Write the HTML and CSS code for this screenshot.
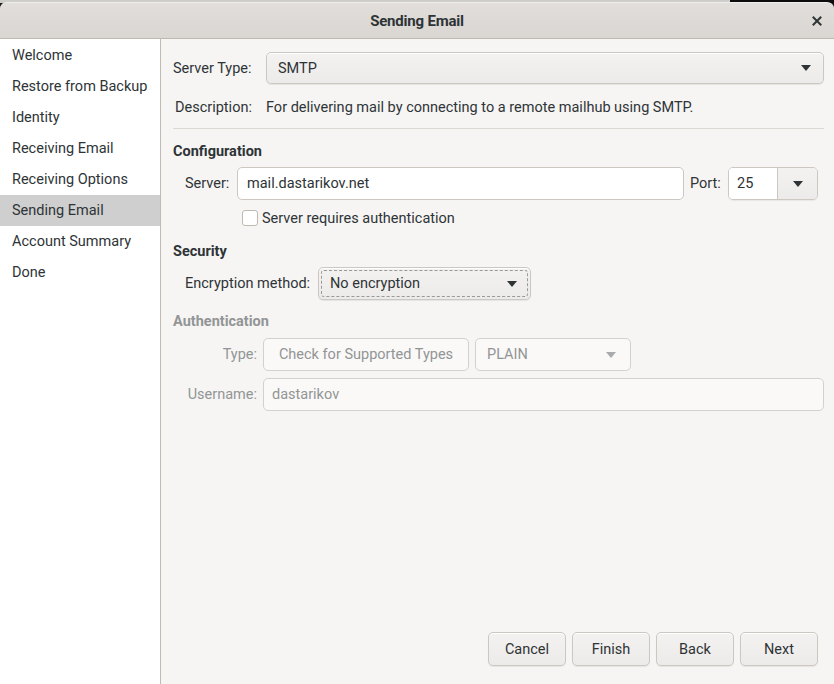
FILE: index.html
```html
<!DOCTYPE html>
<html>
<head>
<meta charset="utf-8">
<link rel="stylesheet" href="styles.css">
</head>
<body>
<div class="desk">
  <div class="desk-left"></div>
  <div class="desk-right"></div>
</div>
<div class="window">
  <header class="titlebar">
    <span class="title">Sending Email</span>
    <span class="close">
      <svg width="10" height="10" viewBox="0 0 10 10"><path d="M1.5 1.5 L8.5 8.5 M8.5 1.5 L1.5 8.5" stroke="#2e3436" stroke-width="2" stroke-linecap="square"/></svg>
    </span>
  </header>
  <div class="body">
    <nav class="sidebar">
      <div class="nav-item">Welcome</div>
      <div class="nav-item">Restore from Backup</div>
      <div class="nav-item">Identity</div>
      <div class="nav-item">Receiving Email</div>
      <div class="nav-item">Receiving Options</div>
      <div class="nav-item selected">Sending Email</div>
      <div class="nav-item">Account Summary</div>
      <div class="nav-item">Done</div>
    </nav>
    <main class="content">
      <div class="row type-row">
        <span class="lbl-type">Server Type:</span>
        <div class="combo combo-type">
          <span>SMTP</span>
          <svg class="arrow" width="10" height="6" viewBox="0 0 10 6"><path d="M0 0 H10 L5 6 Z" fill="#2e3436"/></svg>
        </div>
      </div>
      <div class="row desc-row">
        <span class="lbl-desc">Description:</span>
        <span>For delivering mail by connecting to a remote mailhub using SMTP.</span>
      </div>
      <hr class="sep">
      <h3 class="section">Configuration</h3>
      <div class="row server-row">
        <span class="lbl-server">Server:</span>
        <div class="entry entry-server">mail.dastarikov.net</div>
        <span class="lbl-port">Port:</span>
        <div class="port">
          <span class="port-val">25</span>
          <span class="port-btn"><svg width="10" height="6" viewBox="0 0 10 6"><path d="M0 0 H10 L5 6 Z" fill="#2e3436"/></svg></span>
        </div>
      </div>
      <label class="check-row">
        <span class="checkbox"></span>
        <span>Server requires authentication</span>
      </label>
      <h3 class="section sec-security">Security</h3>
      <div class="row enc-row">
        <span class="lbl-enc">Encryption method:</span>
        <div class="combo combo-enc">
          <div class="focus">
            <span>No encryption</span>
            <svg class="arrow" width="10" height="6" viewBox="0 0 10 6"><path d="M0 0 H10 L5 6 Z" fill="#2e3436"/></svg>
          </div>
        </div>
      </div>
      <h3 class="section disabled sec-auth">Authentication</h3>
      <div class="row auth-row">
        <span class="lbl-auth">Type:</span>
        <div class="btn-dis btn-check">Check for Supported Types</div>
        <div class="btn-dis combo-plain">
          <span>PLAIN</span>
          <svg class="arrow" width="10" height="6" viewBox="0 0 10 6"><path d="M0 0 H10 L5 6 Z" fill="#a8aaab"/></svg>
        </div>
      </div>
      <div class="row user-row">
        <span class="lbl-auth">Username:</span>
        <div class="entry-dis">dastarikov</div>
      </div>
      <div class="spacer"></div>
      <div class="buttons">
        <button class="btn">Cancel</button>
        <button class="btn">Finish</button>
        <button class="btn">Back</button>
        <button class="btn">Next</button>
      </div>
    </main>
  </div>
</div>
</body>
</html>
```

FILE: styles.css
```css
* { box-sizing: border-box; }
html, body { margin: 0; padding: 0; }
body {
  width: 834px;
  height: 684px;
  overflow: hidden;
  font-family: Roboto, "Noto Sans", sans-serif;
  font-size: 14.5px;
  color: #2e3436;
  background: #1a1a1a;
  position: relative;
}
.desk {
  display: flex;
  height: 3px;
}
.desk-left { width: 730px; background: #cfcdca; }
.desk-right { flex: 1; background: #0c0c0c; }
.window {
  display: flex;
  flex-direction: column;
  height: 682px;
  margin-top: -1px;
  background: #f6f5f4;
  border-radius: 7px 7px 0 0;
  overflow: hidden;
}
.titlebar {
  height: 37px;
  flex: none;
  display: flex;
  align-items: center;
  justify-content: center;
  position: relative;
  background: linear-gradient(#e1dedb, #dad6d2);
  border-bottom: 1px solid #bfb8b1;
  border-top: 1px solid #f0eeec;
}
.title {
  font-weight: 700;
  font-size: 15px;
  color: #2e3436;
  letter-spacing: -0.2px;
}
.close {
  position: absolute;
  right: 12px;
  top: 13px;
  display: flex;
}
.body {
  flex: 1;
  display: flex;
  min-height: 0;
}
.sidebar {
  width: 161px;
  flex: none;
  background: #ffffff;
  border-right: 1px solid #c0bab3;
  padding-top: 1px;
}
.nav-item {
  height: 31px;
  line-height: 31px;
  padding-left: 12px;
  white-space: nowrap;
}
.nav-item.selected { background: #cfcfcf; }
.content {
  flex: 1;
  display: flex;
  flex-direction: column;
  padding: 13px 10px 18px 12px;
}
.row { display: flex; align-items: center; }
.lbl-type { width: 93px; }
.combo {
  height: 32px;
  border: 1px solid #cdc7c2;
  border-radius: 5px;
  background: linear-gradient(#f4f2f1, #edebe9);
  box-shadow: inset 0 1px #ffffff, 0 1px 1px rgba(0,0,0,0.07);
  display: flex;
  align-items: center;
  justify-content: space-between;
}
.combo-type {
  flex: 1;
  padding: 0 12px 0 11px;
}
.desc-row {
  margin-top: 8px;
  height: 30px;
}
.lbl-desc { width: 93px; padding-left: 2px; }
.sep {
  border: 0;
  border-top: 1px solid #dcd8d4;
  margin: 6px 0 0 0;
  height: 0;
}
.section {
  margin: 13px 0 0 0;
  font-size: 14.5px;
  font-weight: 700;
  height: 20px;
  line-height: 20px;
}
.server-row { margin-top: 5px; padding-left: 12px; }
.lbl-server { width: 52px; }
.entry {
  height: 33px;
  border: 1px solid #cdc7c2;
  border-radius: 5px;
  background: #ffffff;
  display: flex;
  align-items: center;
  padding-left: 9px;
}
.entry-server { width: 447px; }
.lbl-port { margin-left: 6px; width: 38px; }
.port {
  width: 90px;
  height: 33px;
  border: 1px solid #cdc7c2;
  border-radius: 5px;
  display: flex;
  overflow: hidden;
  box-shadow: 0 1px 1px rgba(0,0,0,0.06);
}
.port-val {
  flex: 1;
  background: #fff;
  display: flex;
  align-items: center;
  padding-left: 8px;
}
.port-btn {
  width: 40px;
  border-left: 1px solid #cdc7c2;
  background: linear-gradient(#f4f2f1, #edebe9);
  display: flex;
  align-items: center;
  justify-content: center;
}
.check-row {
  display: flex;
  align-items: center;
  margin-top: 8px;
  padding-left: 69px;
  height: 20px;
}
.checkbox {
  width: 16px;
  height: 16px;
  border: 1px solid #c0b9b2;
  border-radius: 3px;
  background: #fff;
  margin-right: 4px;
}
.sec-security { margin-top: 14px; }
.enc-row { margin-top: 5px; padding-left: 12px; }
.lbl-enc { width: 133px; }
.combo-enc {
  width: 213px;
  height: 33px;
  padding: 2px;
}
.focus {
  flex: 1;
  height: 100%;
  border: 1px dashed #9a9996;
  border-radius: 3px;
  display: flex;
  align-items: center;
  justify-content: space-between;
  padding: 0 10px 0 8px;
}
.disabled { color: #929595; }
.sec-auth { margin-top: 12px; }
.auth-row { margin-top: 6px; padding-left: 12px; }
.lbl-auth {
  width: 78px;
  text-align: right;
  padding-right: 6px;
  color: #929595;
}
.btn-dis {
  height: 33px;
  border: 1px solid #d5d0cc;
  border-radius: 5px;
  background: #faf9f8;
  color: #929595;
  display: flex;
  align-items: center;
}
.btn-check {
  width: 206px;
  justify-content: center;
}
.combo-plain {
  margin-left: 6px;
  width: 156px;
  justify-content: space-between;
  padding: 0 14px 0 11px;
}
.user-row { margin-top: 7px; padding-left: 12px; }
.entry-dis {
  flex: 1;
  height: 33px;
  border: 1px solid #d5d0cc;
  border-radius: 5px;
  background: #faf9f8;
  color: #929595;
  display: flex;
  align-items: center;
  padding-left: 8px;
}
.spacer { flex: 1; }
.buttons {
  display: flex;
  justify-content: flex-end;
  gap: 6px;
  padding-right: 6px;
}
.btn {
  width: 78px;
  height: 34px;
  border: 1px solid #cdc7c2;
  border-radius: 5px;
  background: linear-gradient(#f4f2f1, #edebe9);
  box-shadow: inset 0 1px #ffffff, 0 1px 1px rgba(0,0,0,0.07);
  font: inherit;
  color: #2e3436;
  padding: 0;
}
```
